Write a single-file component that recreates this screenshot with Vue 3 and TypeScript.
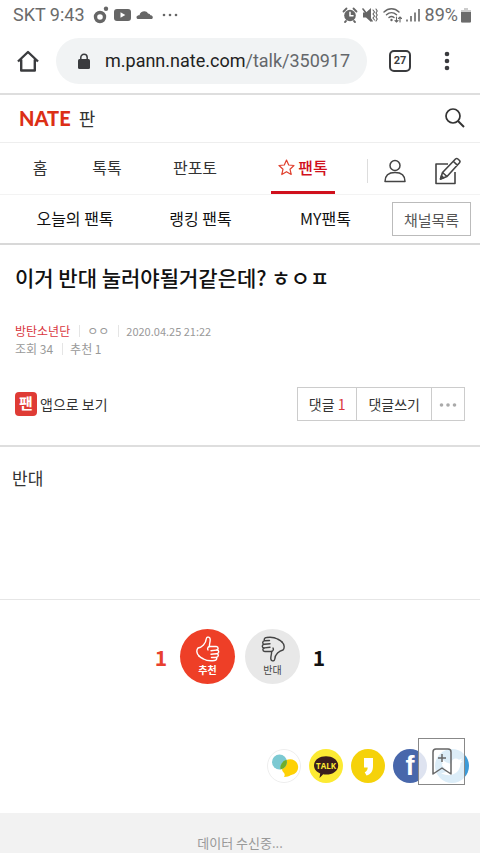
<script setup lang="ts">
import { ref } from 'vue'

interface NavItem {
  label: string
  active?: boolean
}

const navItems: NavItem[] = [
  { label: '홈' },
  { label: '톡톡' },
  { label: '판포토' },
  { label: '팬톡', active: true },
]
const subItems: string[] = ['오늘의 팬톡', '랭킹 팬톡', 'MY팬톡']

const upVotes = ref<number>(1)
const downVotes = ref<number>(1)
</script>

<template>
  <div class="screen">
    <div class="status">
      <span>SKT 9:43</span>
      <svg class="status-apps" width="90" height="20" viewBox="0 0 90 20">
        <circle cx="7" cy="12" r="4.5" fill="none" stroke="#666" stroke-width="3.4" />
        <circle cx="13" cy="3.8" r="2.2" fill="#666" />
        <rect x="21" y="4" width="17" height="12" rx="3" fill="#666" />
        <path d="M27.500 7.200v5.600l4.800-2.800z" fill="#fff" />
        <path d="M44.500 14c-2-1.500-.8-4 2-3.800C47 6.500 53 4.500 55 8.500c1.500 0 2 .8 2.300 1.800C60 10.300 60.500 13 59 14z" fill="#666" />
        <g fill="#666">
          <circle cx="71" cy="10" r="1.300" />
          <circle cx="77" cy="10" r="1.300" />
          <circle cx="83" cy="10" r="1.300" />
        </g>
      </svg>
      <svg class="status-system" width="78" height="20" viewBox="0 0 78 20">
        <g fill="none" stroke="#666" stroke-linecap="round">
          <circle cx="8" cy="10.500" r="5.800" fill="#666" stroke="none" />
          <path d="M8 7.200v3.500h3" stroke="#fff" stroke-width="1.500" />
          <path d="M1.500 6.500l3-3M14.500 6.500l-3-3M4 16l-1 1M12 16l1 1" stroke-width="1.800" />
          <path d="M21 7.500h3l5-4.500v14L24 12.500h-3z" fill="#666" stroke="none" />
          <path d="M21 4l9 12" stroke="#666" stroke-width="1.600" />
          <path d="M31 5l1.500 2-1.500 2 1.500 2-1.500 2 1.500 2M34 4l1.200 2L34 8l1.200 2L34 12l1.200 2L34 16" stroke-width="1.100" />
          <path d="M42 7c4.500-4.300 10.500-4.300 15 0M44.500 9.800c3-2.800 7-2.800 10 0M47 12.500c1.500-1.300 3.500-1.300 5 0" stroke-width="1.500" />
          <circle cx="49.500" cy="15" r="1.200" fill="#666" stroke="none" />
          <path d="M54.500 12v5m-1.500-1.500l1.500 1.500 1.500-1.500M58 17v-5m-1.500 1.500L58 12l1.500 1.500" stroke-width="1.100" />
          <path d="M65 14.500v2M69 11v5.500M73 7.500v9M77 4v12.500" stroke-width="1.600" stroke-linecap="butt" />
        </g>
      </svg>
      <span class="battery-text">89%</span>
      <svg width="10" height="16" viewBox="0 0 10 16">
        <path d="M3 1h4v2h3v11.500a1 1 0 0 1-1 1H1a1 1 0 0 1-1-1V3h3z" fill="#ccc" />
        <path d="M0 5h10v9.500a1 1 0 0 1-1 1H1a1 1 0 0 1-1-1z" fill="#6b6b6b" />
      </svg>
    </div>

    <div class="browser">
      <button class="plain" type="button" aria-label="Home">
        <svg width="22" height="22" viewBox="0 0 22 22" fill="none" stroke="#3a3b3e" stroke-width="2.400" stroke-linejoin="round">
          <path d="M1 11.500L11 2l10 9.500M4.200 9.500V20.500h13.600V9.500" />
        </svg>
      </button>
      <div class="address">
        <svg width="12" height="17" viewBox="0 0 12 17">
          <rect y="6" width="12" height="10" rx="1.500" fill="#3a3b3e" />
          <path d="M2.800 7V4.500a3.200 3.200 0 0 1 6.400 0V7" fill="none" stroke="#3a3b3e" stroke-width="1.500" />
        </svg>
        <a class="url" href="#"><b>m.pann.nate.com</b>/talk/350917</a>
      </div>
      <button class="tabs" type="button" aria-label="Tabs">27</button>
      <button class="plain menu" type="button" aria-label="Menu">
        <svg width="6" height="20" viewBox="0 0 6 20" fill="#3a3b3e">
          <circle cx="3" cy="3" r="2.300" />
          <circle cx="3" cy="10" r="2.300" />
          <circle cx="3" cy="17" r="2.300" />
        </svg>
      </button>
    </div>

    <header class="brand">
      <a class="logo" href="#">NATE</a>
      <a class="service" href="#">판</a>
      <button class="plain search" type="button" aria-label="검색">
        <svg width="20" height="20" viewBox="0 0 20 20" fill="none" stroke="#333" stroke-width="1.700">
          <circle cx="8" cy="8" r="7" />
          <path d="M13 13l6 6" stroke-width="2" />
        </svg>
      </button>
    </header>

    <nav class="nav">
      <a v-for="item in navItems" :key="item.label" href="#" :class="{ active: item.active }">
        <svg v-if="item.active" width="17" height="17" viewBox="0 0 17 17" fill="none" stroke="#e0402e" stroke-width="1.200" stroke-linejoin="round">
          <path d="M8.500 1l2.200 5 5.300.500-4 3.700 1.200 5.300-4.700-2.800-4.700 2.800L5 10.200 1 6.500 6.300 6z" />
        </svg>
        <span>{{ item.label }}</span>
      </a>
      <div class="tools">
        <button class="plain" type="button" aria-label="내 정보">
          <svg width="22" height="24" viewBox="0 0 22 24" fill="none" stroke="#444" stroke-width="1.500">
            <circle cx="11" cy="6.500" r="5" />
            <path d="M1 22.500C1 16.500 5 13.500 11 13.500S21 16.500 21 22.500z" stroke-linejoin="round" />
          </svg>
        </button>
        <button class="plain" type="button" aria-label="글쓰기">
          <svg width="26" height="28" viewBox="0 0 26 28" fill="none" stroke="#444" stroke-width="1.600" stroke-linejoin="round">
            <path d="M13 7H1v19.500h19V15" />
            <path d="M5.500 22l2-6.500L20.500 2q1.200-1 2.400 0l1.600 1.500q1 1 0 2.200L12 19.500zM18.500 4.500l4 3.800M7.500 15.500l4.500 4" />
            <path d="M5.500 22l1-3.200 2.200 2z" fill="#444" />
          </svg>
        </button>
      </div>
    </nav>

    <nav class="subnav">
      <a v-for="label in subItems" :key="label" href="#">{{ label }}</a>
      <button class="channel" type="button">채널목록</button>
    </nav>

    <main>
      <section class="post-head">
        <h1>이거 반대 눌러야될거같은데? ㅎㅇㅍ</h1>
        <div class="meta">
          <a href="#" class="board">방탄소년단</a>
          <span>ㅇㅇ</span>
          <time>2020.04.25 21:22</time>
        </div>
        <div class="meta">
          <span>조회 34</span>
          <span>추천 1</span>
        </div>
        <div class="actions">
          <a class="app-link" href="#"><i class="app-icon">팬</i>앱으로 보기</a>
          <div class="group">
            <button type="button">댓글 <em>1</em></button>
            <button type="button">댓글쓰기</button>
            <button type="button" class="more" aria-label="더보기">
              <svg width="18" height="4" viewBox="0 0 18 4" fill="#aaa">
                <circle cx="2.500" cy="2" r="1.800" />
                <circle cx="9" cy="2" r="1.800" />
                <circle cx="15.500" cy="2" r="1.800" />
              </svg>
            </button>
          </div>
        </div>
      </section>

      <p class="body">반대</p>

      <section class="votes">
        <strong class="up-count">{{ upVotes }}</strong>
        <button class="vote up" type="button" @click="upVotes++">
          <svg width="24" height="26" viewBox="0 0 24 26" fill="none" stroke="currentColor" stroke-width="1.400" stroke-linecap="round" stroke-linejoin="round">
            <path d="M3 20C.5 17.500.2 14 2 12c3.800-.8 8-4.500 8.200-9C10.500.5 14 .2 14.200 3.500c0 3-1 4.500-.8 7h6.800c2.500.2 2.500 3.400.200 3.600l-5.400.6" />
            <path d="M13.400 10.500c-2 .5-2 2.500-1.400 3.500M20.800 14c2.700.2 2.500 3.600-.3 3.800l-5.500.4M21 17.700c2 .7 1.500 3.300-.5 3.500l-5 .3M20 21.200c1.500 1.300.5 3.200-1.500 3.300-4 .5-8 .3-11-1.500C5.500 22 4 21.200 3 20" />
          </svg>
          <span>추천</span>
        </button>
        <button class="vote down" type="button" @click="downVotes++">
          <svg width="24" height="26" viewBox="0 0 24 26" fill="none" stroke="currentColor" stroke-width="1.400" stroke-linecap="round" stroke-linejoin="round">
            <g transform="rotate(180 12 13)">
              <path d="M3 20C.5 17.500.2 14 2 12c3.800-.8 8-4.500 8.200-9C10.500.5 14 .2 14.200 3.500c0 3-1 4.500-.8 7h6.800c2.500.2 2.500 3.400.200 3.600l-5.400.6" />
              <path d="M13.400 10.500c-2 .5-2 2.500-1.400 3.500M20.800 14c2.700.2 2.500 3.600-.3 3.800l-5.500.4M21 17.700c2 .7 1.500 3.300-.5 3.500l-5 .3M20 21.200c1.500 1.300.5 3.200-1.500 3.300-4 .5-8 .3-11-1.500C5.500 22 4 21.200 3 20" />
            </g>
          </svg>
          <span>반대</span>
        </button>
        <strong>{{ downVotes }}</strong>
      </section>

      <section class="share">
        <a href="#" aria-label="네이트온">
          <svg width="34" height="34" viewBox="0 0 34 34">
            <circle cx="17" cy="17" r="16.500" fill="#fff" stroke="#eee" />
            <path d="M21 10.500a8 8 0 1 1 2.500 15.700c-1.500 1-3.500 1.600-6.500 1.800.8-1.200.8-2.200.4-3.500A8.200 8.200 0 0 1 21 10.500z" fill="#fed105" />
            <circle cx="12.500" cy="13" r="7.500" fill="#7cc9d2" />
            <path d="M13.600 20.400A8.200 8.200 0 0 1 19.500 10.800 7.500 7.500 0 0 1 13.600 20.400z" fill="#6fae2c" />
          </svg>
        </a>
        <a href="#" aria-label="카카오톡">
          <svg width="34" height="34" viewBox="0 0 34 34">
            <circle cx="17" cy="17" r="17" fill="#fcea33" />
            <path d="M17 7.200c7 0 12.200 4 12.200 9.200S24 25.600 17 25.600c-1 0-2 0-2.800-.3L10.500 29l.7-4.600C7.500 22.800 5 20 5 16.400 5 11.200 10 7.200 17 7.200z" fill="#3a1d1d" />
            <text x="17" y="19.500" class="talk" text-anchor="middle">TALK</text>
          </svg>
        </a>
        <a href="#" aria-label="카카오스토리">
          <svg width="34" height="34" viewBox="0 0 34 34">
            <circle cx="17" cy="17" r="17" fill="#f5d20a" />
            <path d="M13 9h9v8c0 5-2 8.500-6.500 9.500l-1.800-3.300c2-.8 3-2.500 3-4.700H13z" fill="#fff" />
          </svg>
        </a>
        <a href="#" aria-label="페이스북">
          <svg width="34" height="34" viewBox="0 0 34 34">
            <circle cx="17" cy="17" r="17" fill="#4867ab" />
            <text x="17" y="26" class="fb" text-anchor="middle">f</text>
          </svg>
        </a>
        <a href="#" aria-label="트위터">
          <svg width="34" height="34" viewBox="0 0 34 34">
            <circle cx="17" cy="17" r="17" fill="#3c9bd8" />
            <path d="M7 10c3 3 6 4.500 9.500 4.500-.5-4 4-6.500 7.500-3.800l3.200-1.200-1.500 2.600 2.300-.4-2.500 2.500C25.500 22 19 27 12 26c-2.500-.3-4.500-1-6-2 2.500 0 4.500-.6 6-2-2-.3-3-1.500-3.800-3h1.800C8 18 6.800 16.500 6.800 14.500l1.700.5C6.800 13.500 6.200 12 7 10z" fill="#fff" />
          </svg>
        </a>
        <button class="bookmark" type="button" aria-label="스크랩">
          <svg width="20" height="28" viewBox="0 0 20 28" fill="none" stroke="#666" stroke-width="1.500" stroke-linejoin="round">
            <path d="M1 26V4q0-3 3-3h12q3 0 3 3v22l-9-6z" />
            <path d="M10 6v8M6 10h8" />
          </svg>
        </button>
      </section>
    </main>

    <footer class="loading">데이터 수신중...</footer>
  </div>
</template>

<style>
body {
  margin: 0;
  background: #fff;
}
</style>

<style scoped>
.screen {
  font-family: 'Noto Sans CJK KR', sans-serif;
  color: #333;
  font-size: 16px;
}
a {
  color: inherit;
  text-decoration: none;
}
button {
  font: inherit;
  color: inherit;
  padding: 0;
  background: none;
  border: 0;
  cursor: pointer;
}
svg {
  display: block;
  flex: none;
}
.plain {
  display: flex;
}
.status {
  display: flex;
  align-items: center;
  height: 29px;
  padding: 0 9px 0 13px;
  font: 18px/29px Roboto, sans-serif;
  color: #6b6b6b;
}
.status-apps {
  margin-left: 8px;
}
.status-system {
  margin-left: auto;
}
.battery-text {
  margin: 0 3px 0 5px;
}
.browser {
  display: flex;
  align-items: center;
  height: 64px;
  padding: 0 30px 0 17px;
  border-bottom: 2px solid #dedede;
}
.address {
  display: flex;
  align-items: center;
  flex: 1;
  min-width: 0;
  gap: 15px;
  height: 46px;
  margin: 0 22px 0 17px;
  padding: 0 8px 0 22px;
  border-radius: 23px;
  background: #f1f3f4;
}
.url {
  flex: 1;
  white-space: nowrap;
  font: 18px/28px Roboto, sans-serif;
  color: #64676b;
}
.url b {
  font-weight: 400;
  color: #222;
}
.tabs {
  box-sizing: border-box;
  width: 22px;
  height: 22px;
  border: 2px solid #3a3b3e;
  border-radius: 5px;
  font: bold 11px/18px Roboto, sans-serif;
  color: #3a3b3e;
}
.menu {
  margin-left: 33px;
}
.brand {
  display: flex;
  align-items: center;
  gap: 8px;
  box-sizing: border-box;
  height: 48px;
  padding: 0 15px 2px 19px;
  border-bottom: 1px solid #eee;
}
.logo {
  font: 900 20px/24px Lato, sans-serif;
  color: #dc2f16;
}
.service {
  font-size: 18px;
  line-height: 24px;
}
.search {
  margin-left: auto;
}
.nav {
  display: grid;
  grid-template-columns: 80fr 54fr 122fr 94fr 130fr;
  height: 51px;
  border-bottom: 1px solid #f3f3f3;
}
.nav > a {
  display: flex;
  align-items: center;
  justify-content: center;
  gap: 3px;
  justify-self: center;
  padding-bottom: 3px;
}
.nav > .active {
  padding: 0 7px;
  border-bottom: 3px solid #d0101c;
  color: #d0101c;
  font-weight: 500;
}
.tools {
  display: flex;
  align-items: center;
  justify-content: space-between;
  align-self: center;
  height: 24px;
  margin: 4px 19px 0 17px;
  padding-left: 16px;
  border-left: 1px solid #ddd;
}
.subnav {
  display: grid;
  grid-template-columns: 150fr 101fr 149fr minmax(0, 80fr);
  align-items: center;
  height: 48px;
  border-bottom: 2px solid #d8d8d8;
  text-align: center;
  color: #111;
}
.subnav > a {
  padding-bottom: 3px;
}
.channel {
  justify-self: end;
  box-sizing: border-box;
  width: 79px;
  height: 34px;
  margin-right: 9px;
  border: 1px solid #bbb;
  color: #555;
  font-size: 15px;
}
.post-head {
  padding: 17px 15px 24px;
  border-bottom: 2px solid #dedede;
}
h1 {
  margin: 0 0 30px;
  font-size: 21px;
  line-height: 30px;
  font-weight: 500;
  color: #111;
}
.meta {
  display: flex;
  align-items: center;
  font-size: 12px;
  line-height: 18px;
  color: #999;
}
.meta > * + * {
  margin-left: 9px;
  padding-left: 8px;
  background: linear-gradient(#e5e5e5, #e5e5e5) left center / 1px 12px no-repeat;
}
.meta .board {
  color: #d9363e;
}
.meta time {
  font-size: 11px;
}
.actions {
  display: flex;
  align-items: center;
  justify-content: space-between;
  margin-top: 29px;
}
.app-link {
  display: flex;
  align-items: center;
  gap: 3px;
  font-size: 14px;
}
.app-icon {
  width: 22px;
  height: 24px;
  border-radius: 4px;
  background: #df3b35;
  color: #fff;
  font: bold 15px/22px 'Noto Sans CJK KR', sans-serif;
  text-align: center;
}
.group {
  display: flex;
  border: 1px solid #ccc;
}
.group button {
  height: 32px;
  padding: 0 11px;
  font-size: 14px;
}
.group button + button {
  border-left: 1px solid #ccc;
}
.group .more {
  padding: 2px 7px 0;
}
em {
  font-style: normal;
  color: #d9363e;
}
.body {
  margin: 0;
  padding: 18px 12px 108px;
  border-bottom: 1px solid #e6e6e6;
  font-size: 17px;
  line-height: 26px;
}
.votes {
  display: flex;
  align-items: center;
  justify-content: center;
  gap: 10px;
  padding-top: 29px;
}
.votes strong {
  width: 18px;
  text-align: center;
  font-size: 21px;
  line-height: 30px;
  color: #111;
}
.votes .up-count {
  color: #e8402f;
}
.vote {
  display: flex;
  flex-direction: column;
  align-items: center;
  justify-content: center;
  width: 55px;
  height: 55px;
  border-radius: 50%;
  font-size: 10px;
  line-height: 16px;
}
.up {
  background: #ee3f27;
  color: #fff;
  font-weight: 700;
}
.down {
  background: #e8e8e8;
  color: #444;
}
.share {
  position: relative;
  display: flex;
  justify-content: flex-end;
  gap: 8px;
  padding: 65px 11px 30px;
}
.talk {
  font: bold 8px 'Open Sans', sans-serif;
  fill: #fcea33;
}
.fb {
  font: bold 27px 'Liberation Sans', sans-serif;
  fill: #fff;
}
.bookmark {
  position: absolute;
  right: 15px;
  bottom: 28px;
  display: flex;
  align-items: center;
  justify-content: center;
  width: 47px;
  height: 47px;
  border: 1px solid #888;
  background: rgba(255, 255, 255, 0.82);
}
.loading {
  padding-top: 20px;
  background: #f2f2f2;
  text-align: center;
  font-size: 13px;
  line-height: 20px;
  color: #999;
}
</style>
